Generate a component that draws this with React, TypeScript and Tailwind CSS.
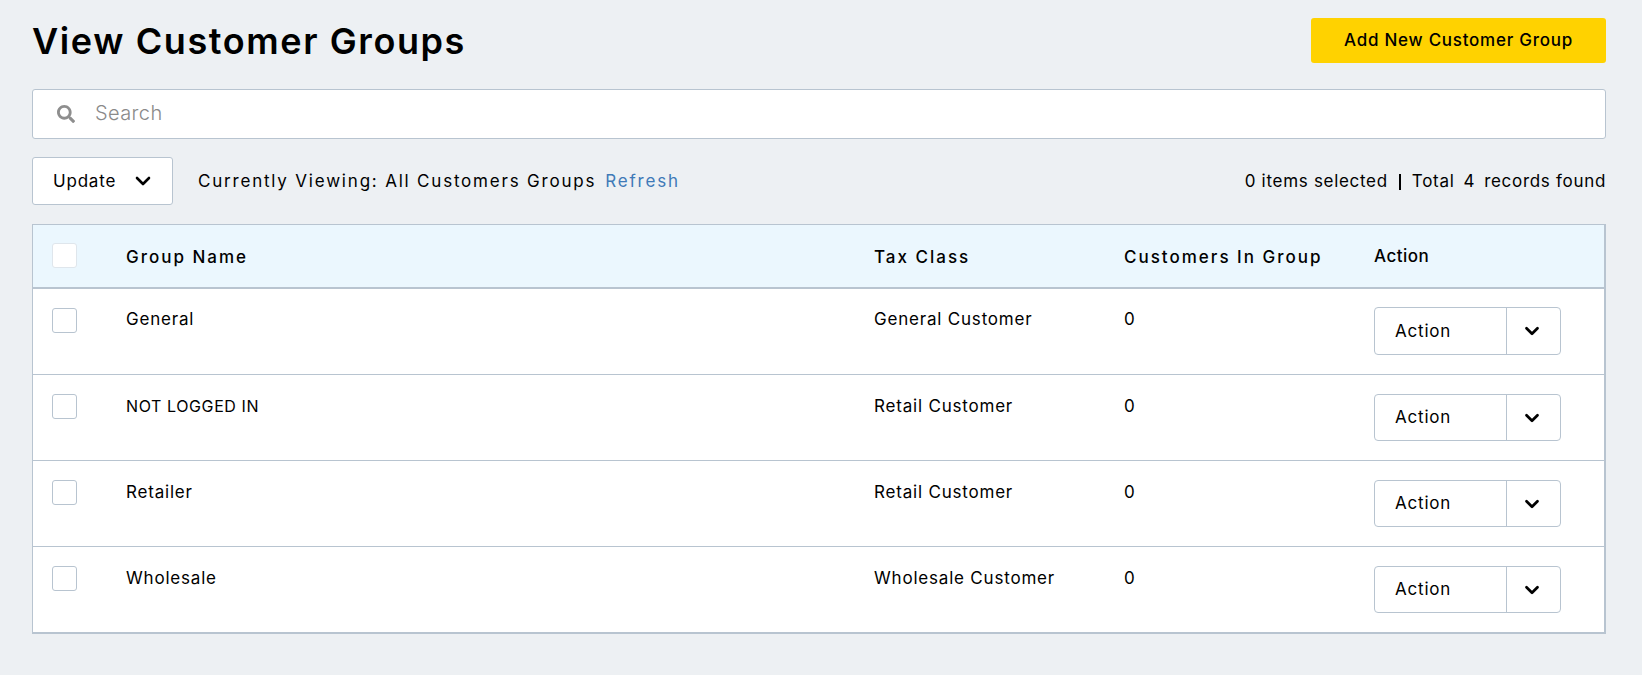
import { ChevronDown } from "lucide-react";
import { FaSearch } from "react-icons/fa";

const groups = [
  { name: "General", taxClass: "General Customer", count: 0 },
  { name: "NOT LOGGED IN", taxClass: "Retail Customer", count: 0 },
  { name: "Retailer", taxClass: "Retail Customer", count: 0 },
  { name: "Wholesale", taxClass: "Wholesale Customer", count: 0 },
];

const rowCols = "grid grid-cols-[93px_748px_250px_250px_1fr]";

function Checkbox({ border }: { border: string }) {
  return <div className={`w-[25px] h-[25px] bg-white rounded-[3px] border ${border}`} />;
}

export default function App() {
  return (
    <div className="min-h-[675px] bg-[#edf0f3] pl-8 pr-9 pt-[18px] text-black font-['Inter','Liberation_Sans',sans-serif]">
      <div className="flex items-start justify-between h-[71px]">
        <h1 className="text-[36px] leading-[46px] font-semibold tracking-[1.6px]">View Customer Groups</h1>
        <button className="w-[295px] h-[45px] bg-[#ffd200] rounded-[3px] text-[17px] font-medium tracking-[0.75px]">
          Add New Customer Group
        </button>
      </div>

      <div className="flex items-center h-[50px] bg-white border border-[#b8c4d0] rounded-[3px] pl-6">
        <FaSearch className="text-[#8e8e8e] text-[18px]" />
        <span className="ml-[20px] pb-[2px] text-[20px] tracking-[0.4px] font-light text-[#8a8a8a]">Search</span>
      </div>

      <div className="flex items-center mt-[18px] h-[48px]">
        <button className="flex items-center w-[141px] h-[48px] bg-white border border-[#b8c4d0] rounded-[3px] pl-5 text-[17px] tracking-[0.8px]">
          <span className="pt-[2px]">Update</span>
          <ChevronDown className="ml-[15px] w-6 h-6" strokeWidth={2.6} />
        </button>
        <span className="ml-[25px] pt-[2px] text-[17px] tracking-[1.8px]">Currently Viewing: All Customers Groups</span>
        <span className="ml-[9px] pt-[2px] text-[17px] tracking-[1.8px] text-[#3f7ab8]">Refresh</span>
        <div className="ml-auto pt-[2px] flex items-center text-[17px] tracking-[0.7px]">
          <span>0 items selected</span>
          <span className="mx-[11px] w-[2px] h-[16px] bg-black" />
          <span>Total</span>
          <span className="mx-[9px]">4</span>
          <span>records found</span>
        </div>
      </div>

      <div className="mt-[19px] border border-r-2 border-b-2 border-[#b8c4d0] bg-white">
        <div className={`${rowCols} h-[64px] items-center bg-[#ebf7fe] border-b-2 border-[#b8c4d0] text-[17px] font-medium tracking-[2px]`}>
          <div className="pl-[19px] -mt-[2px]">
            <Checkbox border="border-[#dfe6ec]" />
          </div>
          <div className="pt-[3px]">Group Name</div>
          <div className="pt-[3px]">Tax Class</div>
          <div className="pt-[3px]">Customers In Group</div>
          <div className="tracking-[0.5px] pt-[1px]">Action</div>
        </div>
        {groups.map((group, i) => (
          <div
            key={group.name}
            className={`${rowCols} pt-[19px] text-[17px] tracking-[0.8px] ${i < groups.length - 1 ? "h-[86px] border-b border-[#b8c4d0]" : "h-[85px]"}`}
          >
            <div className="pl-[19px]">
              <Checkbox border="border-[#b8c4d0]" />
            </div>
            <div className={`${i === 0 ? "leading-[26px] -mt-[2px]" : "leading-[24px]"} ${i === 1 ? "text-[16px] tracking-[0.6px]" : ""}`}>{group.name}</div>
            <div className={i === 0 ? "leading-[26px] -mt-[2px]" : "leading-[24px]"}>{group.taxClass}</div>
            <div className={i === 0 ? "leading-[26px] -mt-[2px]" : "leading-[24px]"}>{group.count}</div>
            <div className={`flex w-[187px] bg-white border border-[#b8c4d0] rounded-[4px] ${i === 0 ? "h-[48px] -mt-px" : "h-[47px]"}`}>
              <div className={`flex items-center w-[132px] pl-[20px] border-r border-[#b8c4d0] ${i === 0 ? "pt-[2px]" : ""}`}>Action</div>
              <div className="flex flex-1 items-center justify-center pr-[3px]">
                <ChevronDown className="w-[22px] h-[22px]" strokeWidth={3} />
              </div>
            </div>
          </div>
        ))}
      </div>
    </div>
  );
}
